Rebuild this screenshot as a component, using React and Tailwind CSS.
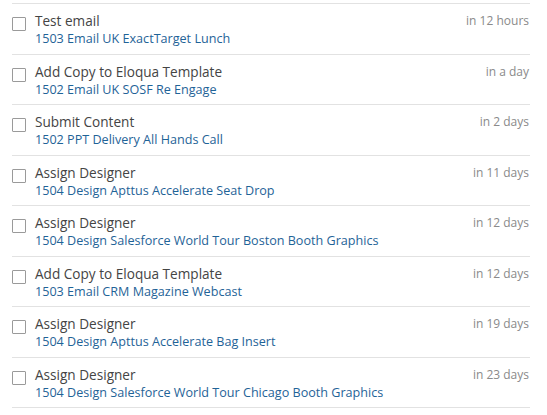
import React from "react";

const tasks = [
    { title: "Test email", project: "1503 Email UK ExactTarget Lunch", due: "in 12 hours" },
    { title: "Add Copy to Eloqua Template", project: "1502 Email UK SOSF Re Engage", due: "in a day" },
    { title: "Submit Content", project: "1502 PPT Delivery All Hands Call", due: "in 2 days" },
    { title: "Assign Designer", project: "1504 Design Apttus Accelerate Seat Drop", due: "in 11 days" },
    { title: "Assign Designer", project: "1504 Design Salesforce World Tour Boston Booth Graphics", due: "in 12 days" },
    { title: "Add Copy to Eloqua Template", project: "1503 Email CRM Magazine Webcast", due: "in 12 days" },
    { title: "Assign Designer", project: "1504 Design Apttus Accelerate Bag Insert", due: "in 19 days" },
    { title: "Assign Designer", project: "1504 Design Salesforce World Tour Chicago Booth Graphics", due: "in 23 days" },
];

export default function App() {
    return (
        <div
            className="bg-white w-[547px] h-[415px] overflow-hidden pt-[3px] pl-[12px] pr-[17px]"
            style={{ fontFamily: '"Open Sans", sans-serif' }}
        >
            <ul className="border-t border-[#e2e2e2]">
                {tasks.map((t, i) => (
                    <li
                        key={i}
                        className="flex items-start h-[50.5px] border-b border-[#e2e2e2] pt-[7px]"
                    >
                        <span className="mt-[6px] w-[14px] h-[14px] border border-[#9a9a9a] rounded-[1px] bg-white flex-shrink-0" />
                        <div className="ml-[9px] flex-1 min-w-0">
                            <div className="text-[13.6px] leading-[19px] text-[#444]">{t.title}</div>
                            <a className="block text-[12.6px] leading-[17px] text-[#1f6397]">{t.project}</a>
                        </div>
                        <div className="text-[12px] leading-[19px] text-[#8a8a8a] pr-[1px]">{t.due}</div>
                    </li>
                ))}
            </ul>
        </div>
    );
}
